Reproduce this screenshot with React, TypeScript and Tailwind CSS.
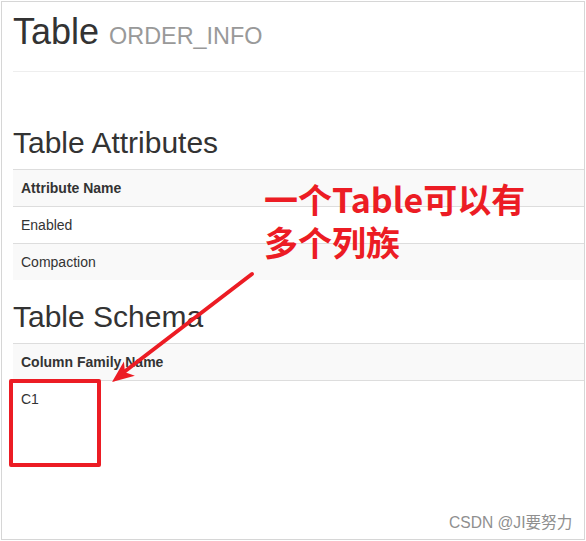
import React from 'react';

const RED = '#ec1c24';

const attributes = ['Enabled', 'Compaction'];
const families = ['C1'];

const DataTable: React.FC<{ head: string; rows: string[] }> = ({ head, rows }) => (
  <table className="w-full border-collapse text-[14px] leading-[20px] text-[#333]">
    <thead>
      <tr className="bg-[#f9f9f9]">
        <th className="border-t border-[#ddd] p-2 text-left font-bold">{head}</th>
      </tr>
    </thead>
    <tbody>
      {rows.map((r, i) => (
        <tr key={r} className={i % 2 === 1 ? 'bg-[#f9f9f9]' : 'bg-white'}>
          <td className="border-t border-[#ddd] p-2">{r}</td>
        </tr>
      ))}
    </tbody>
  </table>
);

const App: React.FC = () => {
  return (
    <div className="relative w-[586px] h-[541px] overflow-hidden bg-white font-['Liberation_Sans',Arial,sans-serif]">
      <div className="ml-px mt-px w-[584px] h-[539px] border border-[#d6d6d6] overflow-hidden">
        <div className="pl-[11px]">
          <h1 className="pt-[10px] h-[50px] text-[36px] leading-[40px] text-[#333]">
            Table <small className="text-[23.4px] leading-none text-[#999]">ORDER_INFO</small>
          </h1>
          <div className="mt-[19px] border-b border-[#eee]" />

          <h2 className="mt-[54px] mb-[10px] text-[30px] leading-[33px] text-[#333]">Table Attributes</h2>
          <DataTable head="Attribute Name" rows={attributes} />

          <h2 className="mt-[20px] mb-[10px] text-[30px] leading-[33px] text-[#333]">Table Schema</h2>
          <DataTable head="Column Family Name" rows={families} />
        </div>
      </div>

      {/* annotation overlay */}
      <div className="absolute left-[264px] top-[177px] text-[34px] leading-[43px] font-bold text-[#ec1c24] font-['Noto_Sans_CJK_SC',sans-serif]">
        <div>一个Table可以有</div>
        <div>多个列族</div>
      </div>
      <svg className="absolute left-0 top-0 pointer-events-none" width="586" height="541">
        <line x1="252" y1="274" x2="124" y2="372" stroke={RED} strokeWidth="4" strokeLinecap="round" />
        <polygon points="112,382 123.9,361.5 125,372.2 134.9,375.7" fill={RED} />
      </svg>
      <div className="absolute left-[9px] top-[379px] w-[92px] h-[88px] border-4 border-[#ec1c24] rounded-[2px]" />

      <div className="absolute left-[449px] top-[514px] text-[15.6px] leading-[18px] text-[#8f8f8f] font-['Liberation_Sans','Noto_Sans_CJK_SC',sans-serif]">
        CSDN @JI要努力
      </div>
    </div>
  );
};

export default App;
